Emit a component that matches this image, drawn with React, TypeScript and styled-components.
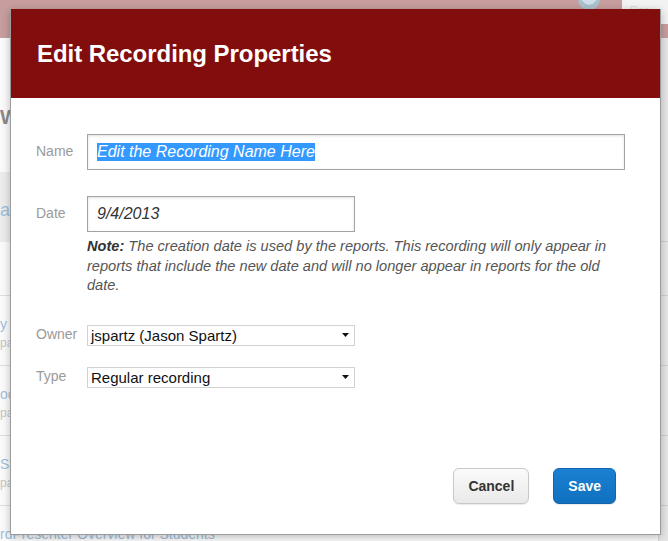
import React from "react";
import styled, { createGlobalStyle } from "styled-components";

const GlobalStyle = createGlobalStyle`
  html, body { margin: 0; padding: 0; }
  body { font-family: "Liberation Sans", Arial, sans-serif; background: #fff; }
`;

const Page = styled.div`
  position: relative;
  width: 668px;
  height: 541px;
  overflow: hidden;
  background: #fafafa;
  display: flex;
  flex-direction: column;
`;

const TopBar = styled.div`
  height: 38px;
  flex: none;
  background: #c79d9d;
  display: flex;
  justify-content: flex-end;
  align-items: flex-start;
`;

const Avatar = styled.div`
  width: 22px;
  height: 22px;
  margin-top: -12px;
  margin-right: 22px;
  border-radius: 50%;
  background: radial-gradient(circle at 50% 40%, #cfe0ea 0 45%, #a9c2cf 46% 100%);
`;

const CornerBox = styled.div`
  width: 46px;
  height: 24px;
  background: #f2f2f2;
  color: #d8d8d8;
  font-size: 11px;
  padding: 4px 0 0 8px;
  box-sizing: border-box;
`;

const PageMain = styled.div`
  flex: 1;
  display: grid;
  grid-template-columns: 1fr 10px;
`;

const MainCol = styled.div`
  display: flex;
  flex-direction: column;
  background: #fafafa;
`;

const SideCol = styled.div`
  background: #e6e6e6;
  border-left: 1px solid #d4d4d4;
  display: flex;
  flex-direction: column;
`;

const Heading = styled.div`
  height: 134px;
  padding-top: 68px;
  box-sizing: border-box;
  font-size: 20px;
  font-weight: bold;
  color: #8a8a8a;
`;

const Band = styled.div`
  height: 70px;
  background: #ececec;
  color: #9ec0de;
  font-size: 18px;
  padding: 28px 0 0 0;
  box-sizing: border-box;
`;

const ListRow = styled.div<{ $h: number }>`
  height: ${(p) => p.$h}px;
  border-bottom: 1px solid #dedede;
  box-sizing: border-box;
  padding: 20px 0 0 0;
  display: flex;
  flex-direction: column;
  gap: 4px;
`;

const RowLink = styled.span`
  color: #9fbfdc;
  font-size: 14px;
`;

const RowSub = styled.span`
  color: #c4c4c4;
  font-size: 12px;
`;

const SideRow = styled.div<{ $h: number }>`
  height: ${(p) => p.$h}px;
  border-bottom: 1px solid #cfcfcf;
  box-sizing: border-box;
`;

const Modal = styled.div`
  position: absolute;
  left: 10px;
  top: 9px;
  width: 651px;
  height: 526px;
  box-sizing: border-box;
  background: #fff;
  border: 1px solid #9c9c9c;
  border-top: none;
  box-shadow: 0 2px 8px rgba(0, 0, 0, 0.25);
  display: flex;
  flex-direction: column;
`;

const Header = styled.div`
  height: 89px;
  flex: none;
  background: #820d0d;
  display: flex;
  align-items: center;
  padding-left: 26px;
`;

const Title = styled.h1`
  margin: 0;
  color: #fff;
  font-size: 24px;
  font-weight: bold;
  letter-spacing: -0.05px;
`;

const Body = styled.div`
  flex: 1;
  display: flex;
  flex-direction: column;
  padding: 36px 35px 30px 25px;
`;

const FieldRow = styled.div<{ $top: number }>`
  display: grid;
  grid-template-columns: 51px 1fr;
  margin-top: ${(p) => p.$top}px;
`;

const Label = styled.label<{ $pad: number }>`
  font-size: 14px;
  line-height: 16px;
  color: #9a9a9a;
  padding-top: ${(p) => p.$pad}px;
`;

const TextBox = styled.div<{ $w?: number }>`
  height: 36px;
  width: ${(p) => (p.$w ? `${p.$w}px` : "100%")};
  box-sizing: border-box;
  border: 1px solid #a3a3a3;
  box-shadow: inset 0 1px 3px rgba(0, 0, 0, 0.12);
  background: #fff;
  display: flex;
  align-items: center;
  padding-left: 9px;
  font-size: 16px;
  font-style: italic;
  color: #333;
`;

const Selected = styled.span`
  background: #3399ff;
  color: #fff;
  line-height: 18px;
`;

const Note = styled.div`
  grid-column: 2;
  margin: 5px 0 0 0;
  font-size: 14.6px;
  line-height: 19.5px;
  font-style: italic;
  color: #555;
`;

const NoteLead = styled.strong`
  color: #333;
`;

const SelectBox = styled.div`
  width: 268px;
  height: 21px;
  box-sizing: border-box;
  border: 1px solid #d2d2d2;
  background: #fff;
  display: flex;
  align-items: center;
  justify-content: space-between;
  padding: 0 5px 0 3px;
  font-size: 15px;
  color: #111;
`;

const Footer = styled.div`
  margin-top: auto;
  margin-right: 9px;
  display: flex;
  justify-content: flex-end;
  gap: 24px;
`;

const Button = styled.button<{ $primary?: boolean }>`
  height: 36px;
  padding: 0 14px;
  border-radius: 6px;
  font-family: inherit;
  font-size: 14px;
  font-weight: bold;
  cursor: pointer;
  border: 1px solid ${(p) => (p.$primary ? "#1563a8" : "#c8c8c8")};
  color: ${(p) => (p.$primary ? "#fff" : "#333")};
  background: ${(p) =>
    p.$primary
      ? "linear-gradient(#1a80d2, #1170c0)"
      : "linear-gradient(#fbfbfb, #e9e9e9)"};
  box-shadow: 0 1px 1px rgba(0, 0, 0, 0.08);
`;

const Caret = () => (
  <svg width="7" height="4" viewBox="0 0 7 4">
    <path d="M0 0h7L3.5 4z" fill="#111" />
  </svg>
);

export default function App() {
  return (
    <>
      <GlobalStyle />
      <Page>
        <TopBar>
          <Avatar />
          <CornerBox>Rec</CornerBox>
        </TopBar>
        <PageMain>
          <MainCol>
            <Heading>W</Heading>
            <Band>a</Band>
            <ListRow $h={54} />
            <ListRow $h={70}>
              <RowLink>y f</RowLink>
              <RowSub>pa</RowSub>
            </ListRow>
            <ListRow $h={70}>
              <RowLink>oo</RowLink>
              <RowSub>pa</RowSub>
            </ListRow>
            <ListRow $h={70}>
              <RowLink>Sit</RowLink>
              <RowSub>pa</RowSub>
            </ListRow>
            <ListRow $h={70}>
              <RowLink>rdPresenter Overview for Students</RowLink>
            </ListRow>
          </MainCol>
          <SideCol>
            <SideRow $h={204} />
            <SideRow $h={54} />
            <SideRow $h={70} />
            <SideRow $h={70} />
            <SideRow $h={70} />
          </SideCol>
        </PageMain>
        <Modal>
          <Header>
            <Title>Edit Recording Properties</Title>
          </Header>
          <Body>
            <FieldRow $top={0}>
              <Label $pad={9}>Name</Label>
              <TextBox>
                <Selected>Edit the Recording Name Here</Selected>
              </TextBox>
            </FieldRow>
            <FieldRow $top={26}>
              <Label $pad={9}>Date</Label>
              <TextBox $w={268}>9/4/2013</TextBox>
              <Note>
                <NoteLead>Note:</NoteLead> The creation date is used by the
                reports. This recording will only appear in reports that include
                the new date and will no longer appear in reports for the old
                date.
              </Note>
            </FieldRow>
            <FieldRow $top={29}>
              <Label $pad={1}>Owner</Label>
              <SelectBox>
                <span>jspartz (Jason Spartz)</span>
                <Caret />
              </SelectBox>
            </FieldRow>
            <FieldRow $top={21}>
              <Label $pad={1}>Type</Label>
              <SelectBox>
                <span>Regular recording</span>
                <Caret />
              </SelectBox>
            </FieldRow>
            <Footer>
              <Button>Cancel</Button>
              <Button $primary>Save</Button>
            </Footer>
          </Body>
        </Modal>
      </Page>
    </>
  );
}
